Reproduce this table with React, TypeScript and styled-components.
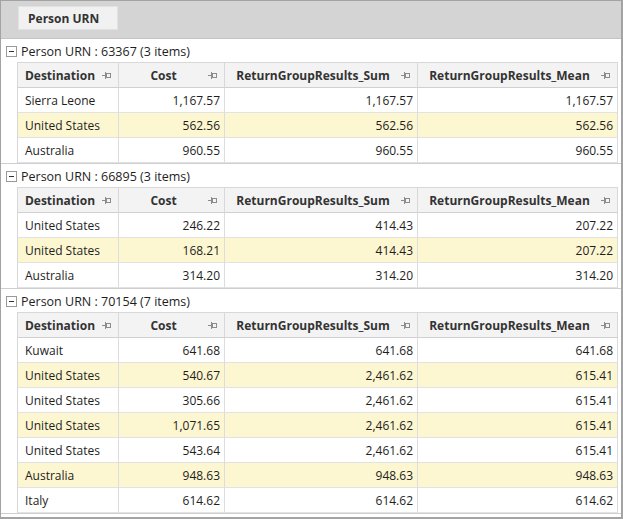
import React from "react";
import styled, { createGlobalStyle } from "styled-components";

const Global = createGlobalStyle`
  html, body { margin: 0; padding: 0; background: #fff; }
  body { font-family: "Open Sans", "Noto Sans", sans-serif; font-size: 12px; color: #1e1e1e; }
  * { box-sizing: border-box; }
`;

const Frame = styled.div`
  width: 623px;
  height: 519px;
  border: 1px solid #a3a3a3;
  border-right-width: 2px;
  border-bottom-width: 2px;
  overflow: hidden;
  display: flex;
  flex-direction: column;
`;

const GroupPanel = styled.div`
  height: 38px;
  flex: none;
  background: #d4d4d4;
  border-bottom: 1px solid #c4c4c4;
  padding: 5px 0 0 17px;
`;

const GroupChip = styled.div`
  width: 100px;
  height: 24px;
  background: #f1f1f1;
  border: 1px solid #e2e2e2;
  font-weight: 700;
  color: #333;
  display: flex;
  align-items: center;
  padding-left: 9px;
`;

const Body = styled.div`
  flex: 1;
  display: flex;
  flex-direction: column;
`;

const Group = styled.div`
  border-bottom: 1px solid #cfcfcf;
`;

const GroupHeader = styled.div`
  height: 23px;
  display: flex;
  align-items: center;
  padding: 2px 0 0 5px;
  gap: 4px;
  color: #1e1e1e;
  font-size: 12.5px;
`;

const Toggle = styled.span`
  width: 11px;
  height: 11px;
  border: 1px solid #9a9a9a;
  background: #fff;
  position: relative;
  flex: none;
  &::after {
    content: "";
    position: absolute;
    left: 2px;
    right: 2px;
    top: 4px;
    height: 1px;
    background: #333;
  }
`;

const Table = styled.div`
  margin-left: 16px;
  width: 601px;
  display: grid;
  grid-template-columns: 101px 106px 193px 200px;
  border-left: 1px solid #d8d8d8;
  border-top: 1px solid #d8d8d8;
`;

const HeadCell = styled.div`
  height: 25px;
  background: #f3f3f3;
  border-right: 1px solid #d8d8d8;
  border-bottom: 1px solid #d0d0d0;
  font-weight: 700;
  color: #333;
  display: flex;
  align-items: center;
  padding-right: 6px;
`;

const HeadText = styled.span`
  flex: 1;
  text-align: center;
  white-space: nowrap;
`;

const Cell = styled.div<{ $alt: boolean; $num: boolean }>`
  height: 25px;
  background: ${(p) => (p.$alt ? "#fdf7d1" : "#fff")};
  border-right: 1px solid #dcdcdc;
  border-bottom: 1px solid #e2e2e2;
  display: flex;
  align-items: center;
  justify-content: ${(p) => (p.$num ? "flex-end" : "flex-start")};
  padding: ${(p) => (p.$num ? "0 4px 0 0" : "0 0 0 7px")};
  white-space: nowrap;
  color: #1e1e1e;
`;

const Pin = () => (
  <svg width="10" height="8" viewBox="0 0 10 8" fill="none" stroke="#8c8c8c" strokeWidth="1">
    <line x1="0" y1="4.5" x2="3" y2="4.5" />
    <line x1="3.5" y1="1" x2="3.5" y2="8" />
    <rect x="4.5" y="2.5" width="4" height="4" />
  </svg>
);

type Row = [string, string, string, string];

const groups: { urn: string; rows: Row[] }[] = [
  {
    urn: "63367",
    rows: [
      ["Sierra Leone", "1,167.57", "1,167.57", "1,167.57"],
      ["United States", "562.56", "562.56", "562.56"],
      ["Australia", "960.55", "960.55", "960.55"],
    ],
  },
  {
    urn: "66895",
    rows: [
      ["United States", "246.22", "414.43", "207.22"],
      ["United States", "168.21", "414.43", "207.22"],
      ["Australia", "314.20", "314.20", "314.20"],
    ],
  },
  {
    urn: "70154",
    rows: [
      ["Kuwait", "641.68", "641.68", "641.68"],
      ["United States", "540.67", "2,461.62", "615.41"],
      ["United States", "305.66", "2,461.62", "615.41"],
      ["United States", "1,071.65", "2,461.62", "615.41"],
      ["United States", "543.64", "2,461.62", "615.41"],
      ["Australia", "948.63", "948.63", "948.63"],
      ["Italy", "614.62", "614.62", "614.62"],
    ],
  },
];

const headers = ["Destination", "Cost", "ReturnGroupResults_Sum", "ReturnGroupResults_Mean"];

export default function App() {
  return (
    <>
      <Global />
      <Frame>
        <GroupPanel>
          <GroupChip>Person URN</GroupChip>
        </GroupPanel>
        <Body>
          {groups.map((g) => (
            <Group key={g.urn}>
              <GroupHeader>
                <Toggle />
                <span>
                  Person URN : {g.urn} ({g.rows.length} items)
                </span>
              </GroupHeader>
              <Table>
                {headers.map((h) => (
                  <HeadCell key={h}>
                    <HeadText>{h}</HeadText>
                    <Pin />
                  </HeadCell>
                ))}
                {g.rows.map((r, i) =>
                  r.map((v, j) => (
                    <Cell key={`${i}-${j}`} $alt={i % 2 === 1} $num={j > 0}>
                      {v}
                    </Cell>
                  ))
                )}
              </Table>
            </Group>
          ))}
        </Body>
      </Frame>
    </>
  );
}
